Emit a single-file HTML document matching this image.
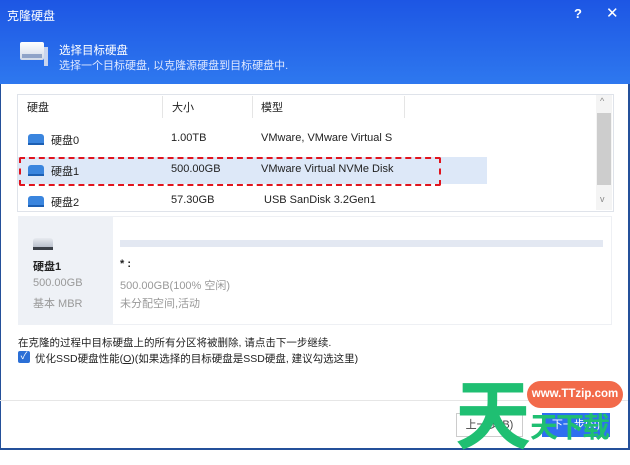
<!DOCTYPE html><html><head><meta charset="utf-8"><style>
body{margin:0;width:630px;height:450px;overflow:hidden;font-family:"Liberation Sans","Noto Sans CJK SC",sans-serif;font-size:11px;color:#222;position:relative;background:#fff}
.a{position:absolute}
</style></head><body>
<div class="a" style="left:0;top:0;width:630px;height:84px;background:linear-gradient(#1d56e4,#2e78ef)"></div>
<div class="a" style="left:7px;top:7px;color:#fff;font-size:12px">克隆硬盘</div>
<div class="a" style="left:574px;top:6px;color:#fff;font-size:13px;font-weight:bold">?</div>
<div class="a" style="left:606px;top:4px;color:#fff;font-size:15px">✕</div>
<div class="a" style="left:20px;top:42px;width:24px;height:18px;background:linear-gradient(#fff,#cfd8e8);border-radius:2px"></div>
<div class="a" style="left:22px;top:54px;width:20px;height:4px;background:#8fa3c8"></div>
<div class="a" style="left:44px;top:47px;width:4px;height:19px;background:#c8d4ee"></div>
<div class="a" style="left:59px;top:42px;color:#fff;font-size:11.5px">选择目标硬盘</div>
<div class="a" style="left:59px;top:57px;color:#dfe8ff;font-size:11px">选择一个目标硬盘, 以克隆源硬盘到目标硬盘中.</div>
<div class="a" style="left:0;top:84px;width:1px;height:366px;background:#24509a"></div>
<div class="a" style="left:628px;top:84px;width:2px;height:366px;background:#24509a"></div>
<div class="a" style="left:0;top:448px;width:630px;height:2px;background:#24509a"></div>
<div class="a" style="left:17px;top:94px;width:595px;height:116px;border:1px solid #dfe3ea"></div>
<div class="a" style="left:162px;top:96px;width:1px;height:22px;background:#e5e5e5"></div>
<div class="a" style="left:252px;top:96px;width:1px;height:22px;background:#e5e5e5"></div>
<div class="a" style="left:404px;top:96px;width:1px;height:22px;background:#e5e5e5"></div>
<div class="a" style="left:27px;top:99px">硬盘</div><div class="a" style="left:172px;top:99px">大小</div><div class="a" style="left:261px;top:99px">模型</div>
<div class="a" style="left:596px;top:95px;width:16px;height:115px;background:#f4f4f4"></div>
<div class="a" style="left:597px;top:113px;width:14px;height:72px;background:#cdcdcd"></div>
<div class="a" style="left:600px;top:96px;color:#888;font-size:9px">^</div>
<div class="a" style="left:600px;top:194px;color:#888;font-size:9px">v</div>
<div class="a" style="left:18px;top:157px;width:469px;height:27px;background:#dde8f8"></div>
<div class="a" style="left:19px;top:157px;width:418px;height:25px;border:2px dashed #e0141e;border-radius:2px"></div>
<div class="a" style="left:28px;top:134px;width:16px;height:9px;background:#3a85de;border-radius:3px 3px 0 0"></div><div class="a" style="left:28px;top:143px;width:16px;height:2px;background:#1c5fb3"></div>
<div class="a" style="left:28px;top:165px;width:16px;height:9px;background:#3a85de;border-radius:3px 3px 0 0"></div><div class="a" style="left:28px;top:174px;width:16px;height:2px;background:#1c5fb3"></div>
<div class="a" style="left:28px;top:196px;width:16px;height:9px;background:#3a85de;border-radius:3px 3px 0 0"></div><div class="a" style="left:28px;top:205px;width:16px;height:2px;background:#1c5fb3"></div>
<div class="a" style="left:51px;top:132px">硬盘0</div><div class="a" style="left:171px;top:132px">1.00TB</div><div class="a" style="left:261px;top:132px">VMware, VMware Virtual S</div>
<div class="a" style="left:51px;top:163px">硬盘1</div><div class="a" style="left:171px;top:163px">500.00GB</div><div class="a" style="left:261px;top:163px">VMware Virtual NVMe Disk</div>
<div class="a" style="left:51px;top:194px">硬盘2</div><div class="a" style="left:171px;top:194px">57.30GB</div><div class="a" style="left:264px;top:194px">USB SanDisk 3.2Gen1</div>
<div class="a" style="left:18px;top:216px;width:594px;height:109px;background:#fff;border:1px solid #eef0f4;box-sizing:border-box"></div>
<div class="a" style="left:18px;top:216px;width:95px;height:109px;background:#eef1f6"></div>
<div class="a" style="left:33px;top:238px;width:20px;height:9px;background:linear-gradient(#e8ebf0,#b9c0cc);border-radius:3px 3px 0 0"></div><div class="a" style="left:33px;top:247px;width:20px;height:3px;background:#3b4048"></div>
<div class="a" style="left:33px;top:258px;font-weight:bold">硬盘1</div>
<div class="a" style="left:33px;top:277px;color:#999">500.00GB</div>
<div class="a" style="left:33px;top:295px;color:#999">基本 MBR</div>
<div class="a" style="left:120px;top:240px;width:483px;height:7px;background:#e3e8f2"></div>
<div class="a" style="left:120px;top:258px;font-weight:bold">* :</div>
<div class="a" style="left:120px;top:277px;color:#999">500.00GB(100% 空闲)</div>
<div class="a" style="left:120px;top:295px;color:#999">未分配空间,活动</div>
<div class="a" style="left:18px;top:335px;font-size:10.5px">在克隆的过程中目标硬盘上的所有分区将被删除, 请点击下一步继续.</div>
<div class="a" style="left:18px;top:351px;width:12px;height:12px;background:#2b6fd6;border-radius:2px;color:#fff;font-size:10px;line-height:12px;text-align:center">✓</div>
<div class="a" style="left:35px;top:351px;font-size:10.5px">优化SSD硬盘性能(<u>O</u>)(如果选择的目标硬盘是SSD硬盘, 建议勾选这里)</div>
<div class="a" style="left:0;top:400px;width:628px;height:1px;background:#e6e6e6"></div>
<div class="a" style="left:456px;top:413px;width:67px;height:24px;border:1px solid #ccc;box-sizing:border-box;text-align:center;line-height:22px;color:#444">上一步(B)</div>
<div class="a" style="left:542px;top:413px;width:68px;height:24px;background:#2e6ff0;color:#fff;text-align:center;line-height:24px">下一步(N)</div>
<div class="a" style="left:455px;top:372px;font-size:76px;font-weight:bold;color:#1fbf72;line-height:76px;font-family:'Noto Sans CJK SC',sans-serif">天</div>
<div class="a" style="left:527px;top:381px;width:96px;height:27px;background:#f26a4a;border-radius:14px;color:#fff;font-weight:bold;font-size:11.5px;text-align:center;line-height:27px">www.TTzip.com</div>
<div class="a" style="left:530px;top:410px;font-size:28px;font-weight:bold;color:#1fbf72;line-height:32px;font-family:'Noto Sans CJK SC',sans-serif;letter-spacing:-2px">天下载</div>
</body></html>
